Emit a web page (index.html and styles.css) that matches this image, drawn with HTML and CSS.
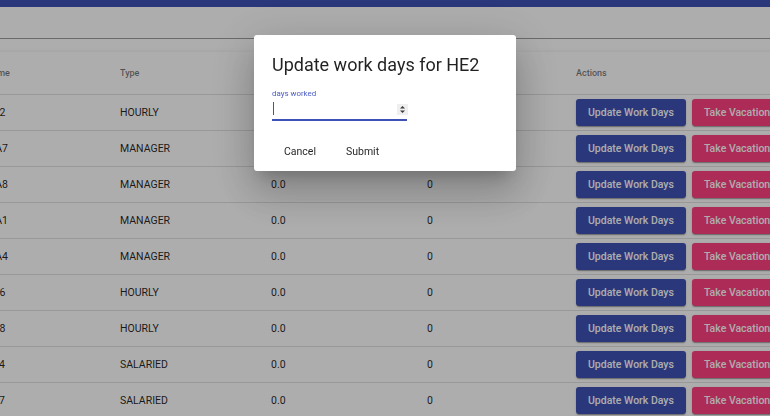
FILE: index.html
```html
<!DOCTYPE html>
<html lang="en">
<head>
<meta charset="utf-8">
<title>Employees</title>
<link rel="stylesheet" href="styles.css">
</head>
<body>
<div class="page">
  <div class="appbar"></div>
  <div class="toolbar"></div>
  <div class="table">
    <div class="row head">
      <div class="cell">Name</div>
      <div class="cell">Type</div>
      <div class="cell"></div>
      <div class="cell"></div>
      <div class="cell">Actions</div>
    </div>
    <div class="row"><div class="cell">HE2</div><div class="cell">HOURLY</div><div class="cell">0.0</div><div class="cell">0</div><div class="cell actions"><span class="btn primary">Update Work Days</span><span class="btn accent">Take Vacation</span></div></div>
    <div class="row"><div class="cell">MA7</div><div class="cell">MANAGER</div><div class="cell">0.0</div><div class="cell">0</div><div class="cell actions"><span class="btn primary">Update Work Days</span><span class="btn accent">Take Vacation</span></div></div>
    <div class="row"><div class="cell">MA8</div><div class="cell">MANAGER</div><div class="cell">0.0</div><div class="cell">0</div><div class="cell actions"><span class="btn primary">Update Work Days</span><span class="btn accent">Take Vacation</span></div></div>
    <div class="row"><div class="cell">MA1</div><div class="cell">MANAGER</div><div class="cell">0.0</div><div class="cell">0</div><div class="cell actions"><span class="btn primary">Update Work Days</span><span class="btn accent">Take Vacation</span></div></div>
    <div class="row"><div class="cell">MA4</div><div class="cell">MANAGER</div><div class="cell">0.0</div><div class="cell">0</div><div class="cell actions"><span class="btn primary">Update Work Days</span><span class="btn accent">Take Vacation</span></div></div>
    <div class="row"><div class="cell">HE6</div><div class="cell">HOURLY</div><div class="cell">0.0</div><div class="cell">0</div><div class="cell actions"><span class="btn primary">Update Work Days</span><span class="btn accent">Take Vacation</span></div></div>
    <div class="row"><div class="cell">HE8</div><div class="cell">HOURLY</div><div class="cell">0.0</div><div class="cell">0</div><div class="cell actions"><span class="btn primary">Update Work Days</span><span class="btn accent">Take Vacation</span></div></div>
    <div class="row"><div class="cell">SA4</div><div class="cell">SALARIED</div><div class="cell">0.0</div><div class="cell">0</div><div class="cell actions"><span class="btn primary">Update Work Days</span><span class="btn accent">Take Vacation</span></div></div>
    <div class="row"><div class="cell">SA7</div><div class="cell">SALARIED</div><div class="cell">0.0</div><div class="cell">0</div><div class="cell actions"><span class="btn primary">Update Work Days</span><span class="btn accent">Take Vacation</span></div></div>
  </div>
</div>

<div class="backdrop"></div>
<div class="overlay">
  <div class="dialog">
    <h2 class="title">Update work days for HE2</h2>
    <div class="field">
      <div class="label">days worked</div>
      <div class="input">
        <span class="caret"></span>
        <svg class="spin" width="11" height="11" viewBox="0 0 11 11">
          <rect width="11" height="11" fill="#efefef"/>
          <path d="M3 4.6 L5.5 2 L8 4.6 Z" fill="#3a3a3a"/>
          <path d="M3 6.4 L5.5 9 L8 6.4 Z" fill="#3a3a3a"/>
        </svg>
      </div>
      <div class="underline"></div>
    </div>
    <div class="dactions">
      <span class="tbtn">Cancel</span>
      <span class="tbtn">Submit</span>
    </div>
  </div>
</div>
</body>
</html>
```

FILE: styles.css
```css
html, body {
  margin: 0;
  padding: 0;
  background: #fff;
  overflow: hidden;
  font-family: Roboto, "Liberation Sans", sans-serif;
}

.page {
  width: 770px;
  height: 416px;
  overflow: hidden;
}

.appbar {
  height: 7px;
  background: #3f51b5;
}

.toolbar {
  height: 32px;
  box-sizing: border-box;
  border-bottom: 1px solid #9d9d9d;
}

.table {
  margin-top: 13px;
  margin-left: -32px;
  width: 900px;
  background: #fff;
  box-shadow: 0 3px 1px -2px rgba(0,0,0,.2), 0 2px 2px rgba(0,0,0,.14), 0 1px 5px rgba(0,0,0,.12);
}

.row {
  display: grid;
  grid-template-columns: 134px 151px 156px 149px auto;
  align-items: center;
  padding-left: 18px;
  height: 36px;
  box-sizing: border-box;
  border-bottom: 1px solid #e0e0e0;
  font-size: 10.5px;
  color: rgba(0,0,0,.87);
}

.row.head {
  height: 43px;
  font-size: 9px;
  font-weight: 500;
  color: rgba(0,0,0,.54);
}

.cell {
  white-space: nowrap;
}

.actions {
  display: flex;
  gap: 6px;
}

.btn {
  display: inline-flex;
  align-items: center;
  height: 27px;
  padding: 0 12px;
  border-radius: 3px;
  font-size: 10.5px;
  font-weight: 500;
  color: #fff;
  box-shadow: 0 2px 1px -1px rgba(0,0,0,.2), 0 1px 1px rgba(0,0,0,.14), 0 1px 3px rgba(0,0,0,.12);
}

.btn.primary { background: #3f51b5; }
.btn.accent { background: #ff4081; }

.backdrop {
  position: fixed;
  inset: 0;
  background: rgba(0,0,0,.32);
}

.overlay {
  position: fixed;
  inset: 0;
  display: flex;
  justify-content: center;
  align-items: flex-start;
  padding-top: 35px;
}

.dialog {
  width: 262px;
  box-sizing: border-box;
  padding: 18px 18px 6px;
  background: #fff;
  border-radius: 3px;
  box-shadow: 0 11px 15px -7px rgba(0,0,0,.2), 0 24px 38px 3px rgba(0,0,0,.14), 0 9px 46px 8px rgba(0,0,0,.12);
}

.title {
  margin: 0;
  font-size: 18px;
  line-height: 24px;
  font-weight: 400;
  color: rgba(0,0,0,.87);
}

.field {
  width: 135px;
  margin-top: 12px;
}

.label {
  font-size: 7.9px;
  line-height: 9px;
  color: #4a5bc4;
}

.input {
  height: 21px;
  display: flex;
  align-items: center;
  justify-content: space-between;
}

.caret {
  width: 1px;
  height: 13px;
  margin-left: 1px;
  background: #3f51b5;
}

.spin {
  margin-right: -1px;
  margin-top: 1px;
}

.underline {
  height: 2px;
  background: #3f51b5;
}

.dactions {
  display: flex;
  gap: 6px;
  margin-top: 17px;
}

.tbtn {
  box-sizing: border-box;
  display: inline-flex;
  align-items: center;
  justify-content: center;
  height: 27px;
  min-width: 48px;
  padding: 0 12px;
  font-size: 10.5px;
  font-weight: 400;
  color: rgba(0,0,0,.87);
}
```
